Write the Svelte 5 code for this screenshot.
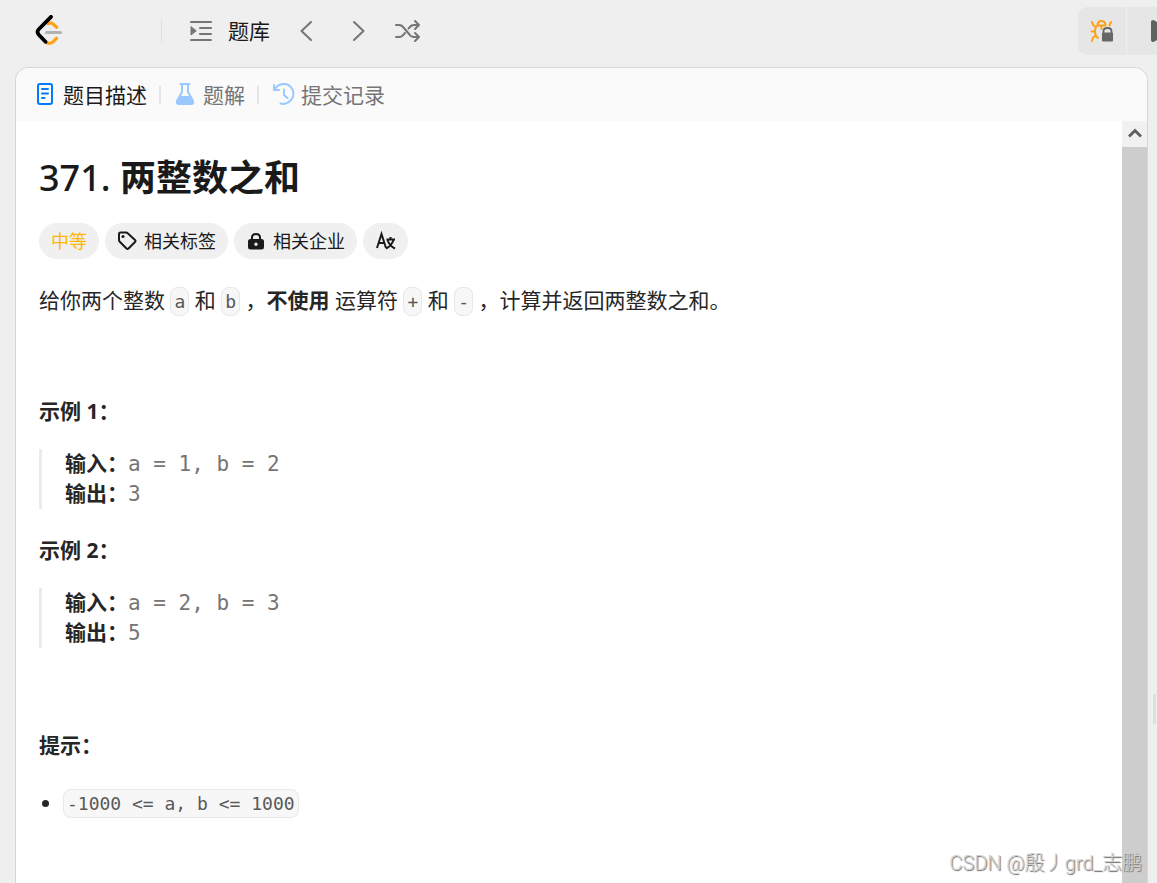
<script>
  const examples = [
    { id: 1, input: 'a = 1, b = 2', output: '3' },
    { id: 2, input: 'a = 2, b = 3', output: '5' }
  ];
</script>

<div class="page">
  <header>
    <a class="logo" href="#home" aria-label="LeetCode">
      <svg width="28" height="32" viewBox="0 0 28 32" fill="none" stroke-width="3.2" stroke-linecap="round" stroke-linejoin="round">
        <path d="M13 8.8q2.5-1.8 5 .2l3.7 3.2M10.5 26.8q4 3.3 7.5 0l3.5-3.5" stroke="#ffa116" />
        <path d="M11.5 17.5h14" stroke="#b3b3b3" />
        <path d="M16 1.8L4 14q-3 3 0 6l6.5 6.8" stroke="#000" stroke-width="3.800" />
      </svg>
    </a>
    <span class="rule"></span>
    <nav>
      <a class="bank" href="#problems">
        <svg width="24" height="24" viewBox="0 0 24 24" fill="none" stroke="#757575" stroke-width="2" stroke-linecap="round">
          <path d="M2 3h20M11 9h11M11 15h11M2 21h20" /><path d="M2 8v8l5-4z" fill="#757575" stroke-width="1" stroke-linejoin="round" />
        </svg>
        题库
      </a>
      <button class="step" aria-label="上一题"><svg width="14" height="24" viewBox="0 0 14 24"><path d="M11 3L1.500 12 11 21" /></svg></button>
      <button class="step" aria-label="下一题"><svg width="14" height="24" viewBox="0 0 14 24"><path d="M2 3l9.500 9L2 21" /></svg></button>
      <button class="step" aria-label="随机一题">
        <svg width="26" height="24" viewBox="0 0 26 24"><path d="M1 6h3q3 0 5 3l5 6q2 3 5 3h5M1 18h3q3 0 5-3l1-1M13.500 9.500l.5-.5q2-3 5-3h5M20 2L24 6l-4 4M20 14l4 4-4 4" /></svg>
      </button>
    </nav>
    <div class="actions">
      <button class="debug" aria-label="调试">
        <svg width="24" height="24" viewBox="0 0 24 24" fill="none" stroke="#ffa116" stroke-width="2" stroke-linecap="round" stroke-linejoin="round">
          <path d="M7.500 6.500q0-4.500 4-4.500t4 4.500zM7.500 6.500Q5 8 5 13q0 4 3 6M11.500 7v3M2 3l1.500 3.500L6 8M21 3l-1.500 3.500M1.500 12.500H5M5.500 17l-2.500 1.500L2 22" />
          <path d="M13.500 14v-2q0-3 4-3t4 3v2" stroke="#666" stroke-width="1.800" />
          <rect x="12" y="13.500" width="11" height="9" rx="1" fill="#666" stroke="none" />
        </svg>
      </button>
      <button class="run" aria-label="运行"><svg width="22" height="24" viewBox="0 0 22 24"><path d="M3 3l15 9-15 9z" fill="#616161" stroke="#616161" stroke-width="4" stroke-linejoin="round" /></svg></button>
    </div>
  </header>

  <main>
    <nav class="tabs">
      <a class="active" href="#description">
        <svg width="20" height="24" viewBox="0 0 20 24" fill="none" stroke="#007aff" stroke-width="2" stroke-linecap="round"><rect x="3" y="1" width="14" height="20" rx="2" /><path d="M7 6h6M7 10.500h6M7 15h2.500" /></svg>
        题目描述
      </a>
      <span></span>
      <a href="#solutions">
        <svg width="20" height="24" viewBox="0 0 20 24"><path d="M5.500 1h9M7 1v8L2 18q-1 3 2 3h12q3 0 2-3l-5-9V1" fill="none" stroke="#99c9ff" stroke-width="2" stroke-linecap="round" /><path d="M5 13h10l3 6-1 2H3l-1-2z" fill="#99c9ff" /></svg>
        题解
      </a>
      <span></span>
      <a href="#submissions">
        <svg width="22" height="24" viewBox="0 0 22 24" fill="none" stroke="#99c9ff" stroke-width="2" stroke-linecap="round" stroke-linejoin="round"><path d="M1 2v5h5M1.500 7C5-1 16-1 19.500 6.500 23 15 15 22.500 7.500 20.500M11 6.500V12l3.500 3" /></svg>
        提交记录
      </a>
    </nav>

    <div class="body">
      <article>
        <h1><span>371.</span> 两整数之和</h1>
        <div class="tags">
          <span class="tag medium">中等</span>
          <button class="tag">
            <svg width="20" height="20" viewBox="0 0 20 20" fill="none" stroke="#1a1a1a" stroke-width="2" stroke-linejoin="round"><path d="M2 3q0-1.500 1.500-1.500H9q1 0 2 1l7 6.500q1 1 0 2l-6.500 6.500q-1 1-2 0L3 11q-1-1-1-2z" /><circle cx="6" cy="5.500" r="1.500" fill="#1a1a1a" stroke="none" /></svg>
            相关标签
          </button>
          <button class="tag">
            <svg width="20" height="20" viewBox="0 0 20 20"><path d="M6 9V6.500Q6 3 10 3t4 3.500V9" fill="none" stroke="#1a1a1a" stroke-width="2" /><path fill-rule="evenodd" fill="#1a1a1a" d="M4.500 8h11q2.500 0 2.500 2.500V16q0 2.500-2.500 2.500h-11Q2 18.500 2 16v-5.500Q2 8 4.500 8zM10 11.500a1.700 1.700 0 1 0 0 3.400 1.700 1.700 0 0 0 0-3.400z" /></svg>
            相关企业
          </button>
          <button class="tag" aria-label="切换语言">
            <svg width="21" height="20" viewBox="0 0 21 20" fill="none" stroke="#1a1a1a" stroke-width="2"><path d="M2 17L6.500 3 11 17M3.500 12h6M11.500 8.500h8.500M15.500 6v2.500M12.500 9q2 6 7.500 8.500M18.500 9q-2 6-7.500 8.500" /></svg>
          </button>
        </div>

        <p class="statement">给你两个整数 <code>a</code> 和 <code>b</code> ，<strong>不使用</strong> 运算符 <code>+</code> 和 <code>-</code>&nbsp;，计算并返回两整数之和。</p>

        {#each examples as e (e.id)}
          <p class="label">示例 {e.id}：</p>
          <pre><strong>输入：</strong>{e.input}
<strong>输出：</strong>{e.output}</pre>
        {/each}

        <p class="label hint">提示：</p>
        <ul><li><code>-1000 &lt;= a, b &lt;= 1000</code></li></ul>
      </article>
      <div class="scroll">
        <button aria-label="向上滚动"><svg width="14" height="12" viewBox="0 0 14 12"><path d="M1 8.500L7 2.500 13 8.500" fill="none" stroke="#606060" stroke-width="3" /></svg></button>
      </div>
    </div>
  </main>
  <i class="grip"></i>
  <div class="watermark">CSDN @殷丿grd_志鹏</div>
</div>

<style>
  :global(body) { background: #efefef; }
  .page {
    position: relative;
    display: flex;
    flex-direction: column;
    height: 100vh;
    overflow: hidden;
    color: #262626;
    font: 21px/30px "Open Sans", "Noto Sans CJK SC", sans-serif;
  }
  button { border: 0; padding: 0; margin: 0; background: none; font: inherit; color: inherit; }
  a { color: inherit; text-decoration: none; }
  svg { display: block; flex: none; }
  header { display: flex; align-items: center; height: 62px; padding-left: 35px; flex: none; }
  .rule { width: 1px; height: 24px; margin-left: 98px; background: #e0e0e0; }
  header nav { display: flex; align-items: center; margin-left: 27px; gap: 38px; }
  .bank { display: flex; align-items: center; gap: 15px; color: #1a1a1a; margin-right: -8px; }
  .step svg { fill: none; stroke: #757575; stroke-width: 2; stroke-linecap: round; stroke-linejoin: round; }
  .step:last-child { margin-left: -9px; }
  .actions { display: flex; margin-left: auto; gap: 1px; width: 79px; overflow: hidden; border-radius: 9px 0 0 9px; }
  .actions button { display: flex; align-items: center; height: 48px; background: #e6e6e6; flex: none; }
  .debug { width: 48px; justify-content: center; }
  .run { width: 48px; padding-left: 23px; }
  main {
    display: flex;
    flex-direction: column;
    flex: 1;
    min-height: 0;
    margin: 5px 9px 0 15px;
    border: 1px solid #d6d6d6;
    border-bottom: 0;
    border-radius: 14px 14px 0 0;
    background: #fff;
    overflow: hidden;
  }
  .tabs { display: flex; align-items: center; height: 53px; flex: none; padding-left: 19px; background: #fafafa; color: #757575; }
  .tabs a { display: flex; align-items: center; gap: 8px; }
  .tabs a:last-child { gap: 6px; }
  .tabs .active { color: #1a1a1a; }
  .tabs span { width: 2px; height: 18px; margin: 0 14px 0 12px; background: #e6e6e6; }
  .body { display: flex; flex: 1; min-height: 0; }
  article { flex: 1; min-width: 0; padding: 32px 23px; }
  h1 { margin: 0; font-size: 36px; line-height: 50px; font-weight: 700; color: #1a1a1a; }
  h1 span { font-family: "Noto Sans", sans-serif; font-weight: 500; }
  .tags { display: flex; gap: 6px; margin-top: 20px; }
  .tag { display: flex; align-items: center; gap: 7px; height: 36px; padding: 0 12px; border-radius: 18px; background: #f0f0f0; color: #1a1a1a; font-size: 18px; }
  .medium { color: #ffb800; }
  p { margin: 0; }
  .statement { margin: 26px 0 81px; }
  .label { font-weight: 700; }
  .hint { margin-top: 82px; }
  code { font: 18px/27px "DejaVu Sans Mono", monospace; color: #595959; background: #f7f7f7; border: 1px solid #e8e8e8; border-radius: 8px; padding: 3px; }
  pre { margin: 23px 0 26px; padding-left: 23px; border-left: 3px solid #ebebeb; color: #757575; font: 21px/30px "DejaVu Sans Mono", monospace; }
  pre strong { color: #262626; font-family: "Noto Sans CJK SC", sans-serif; line-height: 20px; }
  ul { margin: 27px 0 0; padding-left: 24px; }
  .scroll { width: 25px; background: #cdcdcd; }
  .scroll button { display: grid; place-items: center; width: 100%; height: 26px; background: #f1f1f1; }
  .grip { position: absolute; right: 1px; top: 694px; width: 3px; height: 30px; border-radius: 2px; background: #dedede; }
  .watermark { position: absolute; right: 15px; bottom: 5px; font: 300 20px/30px Roboto, "Noto Sans CJK SC", sans-serif; color: #d2d2d2; text-shadow: 1px 1px 1px #666; }
</style>
